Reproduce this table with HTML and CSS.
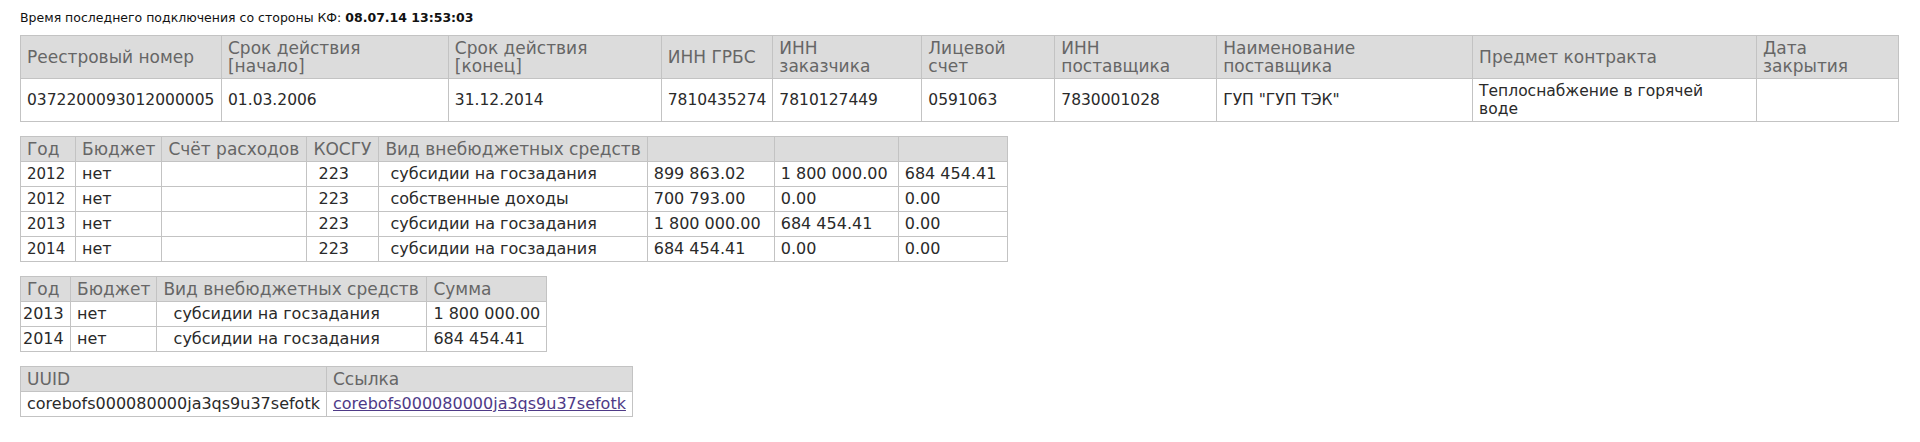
FILE: index.html
```html
<!DOCTYPE html>
<html lang="ru">
<head>
  <meta charset="UTF-8">
  <title>Контракт 0372200093012000005</title>
  <link rel="stylesheet" href="styles.css">
</head>
<body>
  <p class="last-sync">Время последнего подключения со стороны КФ: <b>08.07.14 13:53:03</b></p>

  <table class="grid contract">
    <tr>
      <th class="c-reg">Реестровый номер</th>
      <th class="c-start">Срок действия<br>[начало]</th>
      <th class="c-end">Срок действия<br>[конец]</th>
      <th class="c-grbs">ИНН ГРБС</th>
      <th class="c-cust">ИНН<br>заказчика</th>
      <th class="c-acc">Лицевой<br>счет</th>
      <th class="c-supp">ИНН<br>поставщика</th>
      <th class="c-name">Наименование<br>поставщика</th>
      <th class="c-subj">Предмет контракта</th>
      <th class="c-close">Дата<br>закрытия</th>
    </tr>
    <tr>
      <td>0372200093012000005</td>
      <td>01.03.2006</td>
      <td>31.12.2014</td>
      <td>7810435274</td>
      <td>7810127449</td>
      <td>0591063</td>
      <td>7830001028</td>
      <td>ГУП "ГУП ТЭК"</td>
      <td class="subj">Теплоснабжение в горячей воде</td>
      <td></td>
    </tr>
  </table>

  <table class="grid finance">
    <tr>
      <th class="f-year">Год</th>
      <th class="f-budget">Бюджет</th>
      <th class="f-account">Счёт расходов</th>
      <th class="f-kosgu">КОСГУ</th>
      <th class="f-kind">Вид внебюджетных средств</th>
      <th class="f-sum1"></th>
      <th class="f-sum2"></th>
      <th class="f-sum3"></th>
    </tr>
    <tr>
      <td class="year">2012</td><td>нет</td><td></td><td>&nbsp;223</td>
      <td>&nbsp;субсидии на госзадания</td>
      <td class="sum">899 863.02</td><td class="sum">1 800 000.00</td><td class="sum">684 454.41</td>
    </tr>
    <tr>
      <td class="year">2012</td><td>нет</td><td></td><td>&nbsp;223</td>
      <td>&nbsp;собственные доходы</td>
      <td class="sum">700 793.00</td><td class="sum">0.00</td><td class="sum">0.00</td>
    </tr>
    <tr>
      <td class="year">2013</td><td>нет</td><td></td><td>&nbsp;223</td>
      <td>&nbsp;субсидии на госзадания</td>
      <td class="sum">1 800 000.00</td><td class="sum">684 454.41</td><td class="sum">0.00</td>
    </tr>
    <tr>
      <td class="year">2014</td><td>нет</td><td></td><td>&nbsp;223</td>
      <td>&nbsp;субсидии на госзадания</td>
      <td class="sum">684 454.41</td><td class="sum">0.00</td><td class="sum">0.00</td>
    </tr>
  </table>

  <table class="grid plan">
    <tr>
      <th class="p-year">Год</th>
      <th class="p-budget">Бюджет</th>
      <th class="p-kind">Вид внебюджетных средств</th>
      <th class="p-sum">Сумма</th>
    </tr>
    <tr>
      <td class="year-left">2013</td><td>нет</td><td>&nbsp;&nbsp;субсидии на госзадания</td><td>1 800 000.00</td>
    </tr>
    <tr>
      <td class="year-left">2014</td><td>нет</td><td>&nbsp;&nbsp;субсидии на госзадания</td><td>684 454.41</td>
    </tr>
  </table>

  <table class="grid links">
    <tr>
      <th class="l-uuid">UUID</th>
      <th class="l-link">Ссылка</th>
    </tr>
    <tr>
      <td>corebofs000080000ja3qs9u37sefotk</td>
      <td><a href="#corebofs000080000ja3qs9u37sefotk">corebofs000080000ja3qs9u37sefotk</a></td>
    </tr>
  </table>
</body>
</html>
```

FILE: styles.css
```css
body {
  margin: 8px 21px 8px 20px;
  font-family: "DejaVu Sans", Verdana, sans-serif;
  color: #111;
  background: #fff;
}
.last-sync {
  font-size: 12.5px;
  line-height: 15px;
  margin: 2px 0 10px 0;
}
.grid {
  border-collapse: collapse;
  margin-bottom: 14px;
  font-size: 16px;
  line-height: 18px;
}
.grid th,
.grid td {
  border: 1px solid #c3c3c3;
  padding: 3px 6px;
  text-align: left;
  white-space: nowrap;
}
.grid th {
  background-color: #dcdcdc;
  color: #666;
  font-weight: normal;
  font-size: 17px;
}
.grid td {
  color: #2a2a2a;
}
.grid a {
  color: #4e3a87;
}

/* первая таблица растянута на всю ширину */
.contract {
  width: 100%;
}
.contract th,
.contract td {
  white-space: normal;
}
.contract td {
  height: 36px;
  font-size: 15.5px;
}
.contract td.subj {
  padding-right: 20px;
}
.c-reg { width: 188px; }
.c-start { width: 214px; }
.c-end { width: 200px; }
.c-grbs { width: 98px; }
.c-cust { width: 136px; }
.c-acc { width: 120px; }
.c-supp { width: 149px; }
.c-name { width: 243px; }
.c-subj { width: 271px; }
.c-close { width: 129px; }

/* расходы по годам */
.f-year { width: 42px; }
.f-budget { width: 73px; }
.f-account { width: 132px; }
.f-kosgu { width: 59px; }
.f-kind { width: 252px; }
.f-sum1 { width: 114px; }
.f-sum2 { width: 111px; }
.f-sum3 { width: 96px; }
.year {
  text-align: right;
  font-size: 15px;
}
.sum {
  padding-left: 11px;
}

/* план */
.p-year { width: 37px; }
.p-budget { width: 70px; }
.p-kind { width: 257px; }
.p-sum { width: 107px; }
.plan td.year-left {
  padding-left: 2px;
}

/* ссылки */
.l-uuid { width: 293px; }
.l-link { width: 292px; }
```
